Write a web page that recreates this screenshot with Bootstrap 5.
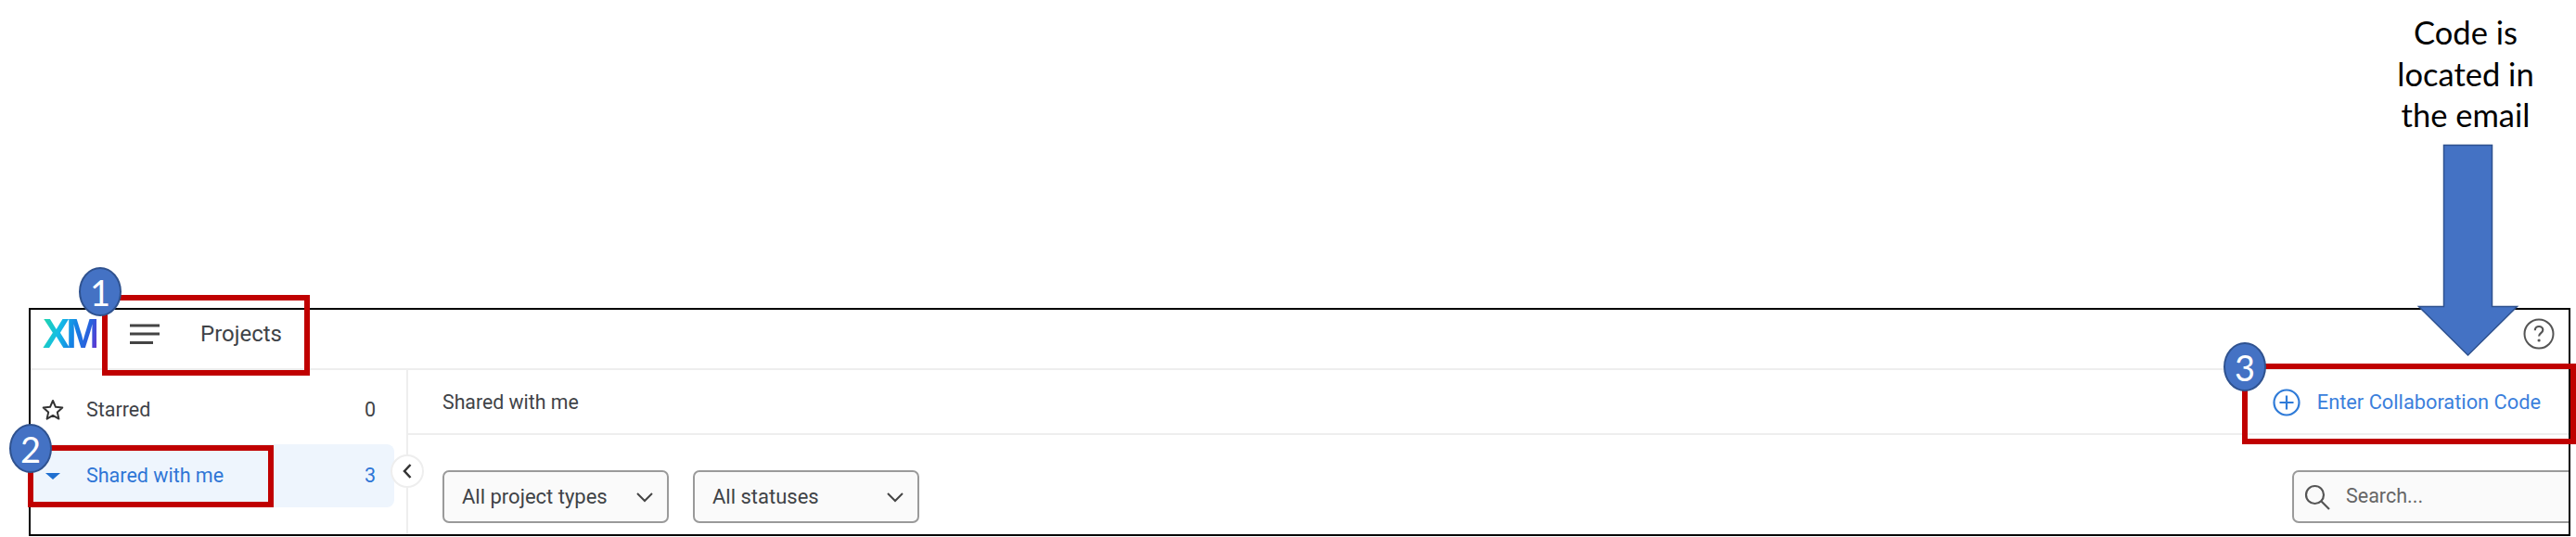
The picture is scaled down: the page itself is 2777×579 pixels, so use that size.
<!DOCTYPE html>
<html lang="en">
<head>
<meta charset="utf-8">
<title>Projects</title>
<link rel="stylesheet" href="https://cdn.jsdelivr.net/npm/bootstrap@5.3.0/dist/css/bootstrap.min.css">
<style>
html,body{height:100%}
body{background:#fff;overflow:hidden;font-family:Roboto,"Liberation Sans",sans-serif;color:#3f4347;font-size:21.500px}
.stage{position:relative;width:2777px;height:579px;overflow:hidden}
.callout-zone{height:332px;padding-top:13px;padding-right:34px}
.callout{width:170px;font-family:Lato,"Open Sans",sans-serif;font-size:34.500px;line-height:44.500px;color:#000;text-align:center}
.app-frame{margin-left:31px;width:2740px;height:246px;border:2px solid #000;overflow:hidden;position:relative;background:#fff}
.top-bar{height:65px;border-bottom:2px solid #eee;padding-bottom:11px}
.xm-logo{width:58px;margin-left:13px;font-family:"Liberation Sans",sans-serif;font-weight:700;font-size:44px;line-height:1;letter-spacing:-4px;background:linear-gradient(105deg,#20d8a4 0%,#14bce6 32%,#1480e4 58%,#2a5fdc 80%,#6a2fd0 100%);-webkit-background-clip:text;background-clip:text;color:transparent}
.burger{margin-left:36px;width:32px;height:24px}
.page-name{margin-left:44px;font-size:24px}
.help-icon{margin-left:auto;margin-right:15px;width:34px;height:34px}
.body-row{height:179px}
.side-col{width:407px;flex:none;border-right:2px solid #eee;padding:9px 13px 0 0}
.side-item{height:68px;padding:0 20px 0 60px;margin-bottom:3px;position:relative;border-radius:0 8px 8px 0}
.side-item.is-on{background:#eef5fd;color:#2e76d6}
.side-ico{position:absolute;left:12px;top:50%;transform:translateY(-50%)}
.main-col{min-width:0}
.sub-bar{height:70px;border-bottom:2px solid #eee;padding:2px 30px 0 37px;font-size:21.300px}
.code-link{color:#3b7fdc;font-size:21.800px;gap:18px;padding:0;border:0}
.filter-row{padding:38px 0 0 37px;gap:26px}
.pick-btn{width:244px;height:57px;background:#fafafa;border:2px solid #9a9a9a;border-radius:7px;color:#3f4347;font-size:22px;padding:0 14px 0 19px;flex:none}
.search-wrap{margin-left:auto;width:306px;height:57px;margin-right:-8px;background:#fafafa;border:2px solid #9a9a9a;border-radius:7px;padding-left:11px;gap:17px;color:#666;flex:none}
.collapse-knob{position:absolute;left:388px;top:156px;width:36px;height:36px;border-radius:50%;background:#fff;border:2px solid #eee}
.over-art{position:absolute;left:0;top:0;pointer-events:none}
.num-dot{position:absolute;width:46px;height:53px;border-radius:50%;background:#4472c4;border:2px solid #2f528f;color:#fff;font-family:Lato,"Open Sans",sans-serif;font-size:38px;line-height:1}
.red-box{position:absolute;border:6px solid #c00000}
.box-a{left:110px;top:318px;width:224px;height:87px}
.box-b{left:30px;top:480px;width:265px;height:67px}
.box-c{left:2417px;top:392px;width:360px;height:87px}
.dot-a{left:85px;top:288px}
.dot-b{left:10px;top:457px}
.dot-c{left:2397px;top:369px}
</style>
</head>
<body>
<div class="stage">
  <div class="callout-zone d-flex justify-content-end">
    <div class="callout">Code is located in the email</div>
  </div>
  <div class="app-frame">
    <div class="top-bar d-flex align-items-center">
      <div class="xm-logo">XM</div>
      <svg class="burger" viewBox="0 0 32 24" fill="none" stroke="#444" stroke-width="3"><path d="M0 3h32M0 12h32M0 21.500h25"/></svg>
      <div class="page-name">Projects</div>
      <svg class="help-icon" viewBox="0 0 34 34" fill="none"><circle cx="17" cy="17" r="15.500" stroke="#555" stroke-width="2"/><path d="M12.800 13.200c0-2.700 2-4.200 4.300-4.200s4.200 1.500 4.200 3.800c0 3.200-4.200 3.400-4.200 6.600" stroke="#555" stroke-width="2.200"/><circle cx="17.100" cy="24" r="1.600" fill="#555"/></svg>
    </div>
    <div class="body-row d-flex">
      <div class="side-col">
        <div class="side-item d-flex align-items-center justify-content-between">
          <svg class="side-ico" width="24" height="24" viewBox="0 0 24 24" fill="none" stroke="#333" stroke-width="2" stroke-linejoin="round"><path d="M12 2l3 6.800 7.300.7-5.500 4.900 1.600 7.200L12 17.900l-6.400 3.700 1.600-7.200L1.700 9.500 9 8.800z"/></svg>
          <span>Starred</span><span>0</span>
        </div>
        <div class="side-item is-on d-flex align-items-center justify-content-between">
          <svg class="side-ico" width="24" height="12" viewBox="0 0 24 12"><path d="M2 3h16l-8 7z" fill="#1f6fd0" transform="translate(2 0)"/></svg>
          <span>Shared with me</span><span>3</span>
        </div>
      </div>
      <div class="main-col flex-grow-1">
        <div class="sub-bar d-flex align-items-center justify-content-between">
          <span>Shared with me</span>
          <button type="button" class="btn code-link d-flex align-items-center">
            <svg width="30" height="30" viewBox="0 0 30 30" fill="none" stroke="#2f7bd8" stroke-width="2.200"><circle cx="15" cy="15" r="13.500"/><path d="M15 7.500v15M7.500 15h15"/></svg>
            <span>Enter Collaboration Code</span>
          </button>
        </div>
        <div class="filter-row d-flex">
          <button type="button" class="btn pick-btn d-flex align-items-center justify-content-between">
            <span>All project types</span>
            <svg width="20" height="12" viewBox="0 0 20 12" fill="none" stroke="#444" stroke-width="2"><path d="M2 2l8 8 8-8"/></svg>
          </button>
          <button type="button" class="btn pick-btn d-flex align-items-center justify-content-between">
            <span>All statuses</span>
            <svg width="20" height="12" viewBox="0 0 20 12" fill="none" stroke="#444" stroke-width="2"><path d="M2 2l8 8 8-8"/></svg>
          </button>
          <div class="search-wrap d-flex align-items-center">
            <svg width="28" height="28" viewBox="0 0 28 28" fill="none" stroke="#555" stroke-width="2.200"><circle cx="11.500" cy="11.500" r="9.500"/><path d="M18.500 18.500L27 27"/></svg>
            <span>Search...</span>
          </div>
        </div>
      </div>
    </div>
    <div class="collapse-knob d-flex align-items-center justify-content-center">
      <svg width="12" height="18" viewBox="0 0 12 18" fill="none" stroke="#333" stroke-width="2.500"><path d="M9.500 2L3 9l6.500 7"/></svg>
    </div>
  </div>

  <svg class="over-art" width="2777" height="579" viewBox="0 0 2777 579"><path d="M2634.500 156.500h52v174h27l-53 52.500-53-52.500h27z" fill="#4472c4" stroke="#2f528f" stroke-width="1.500"/></svg>
  <div class="red-box box-a"></div>
  <div class="red-box box-b"></div>
  <div class="red-box box-c"></div>
  <div class="num-dot dot-a d-flex align-items-center justify-content-center">1</div>
  <div class="num-dot dot-b d-flex align-items-center justify-content-center">2</div>
  <div class="num-dot dot-c d-flex align-items-center justify-content-center">3</div>
</div>
<script src="https://cdn.jsdelivr.net/npm/bootstrap@5.3.0/dist/js/bootstrap.bundle.min.js"></script>
</body>
</html>
